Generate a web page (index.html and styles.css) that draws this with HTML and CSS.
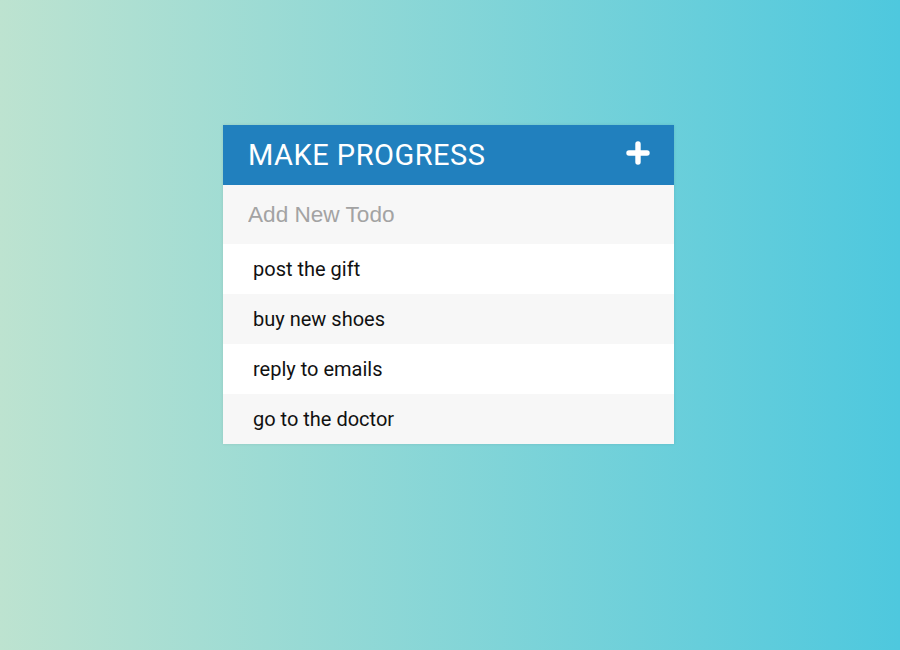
FILE: index.html
```html
<!DOCTYPE html>
<html lang="en">
<head>
<meta charset="utf-8">
<title>Make Progress</title>
<link rel="stylesheet" href="styles.css">
</head>
<body>
<div class="card">
  <header class="card-header">
    <h1 class="title">MAKE PROGRESS</h1>
    <button class="add-btn" aria-label="Add todo">
      <svg width="24" height="24" viewBox="0 0 24 24" aria-hidden="true">
        <path d="M12 3v18M3 12h18" stroke="#fff" stroke-width="5.4" stroke-linecap="round" fill="none"/>
      </svg>
    </button>
  </header>
  <input class="new-todo" type="text" placeholder="Add New Todo">
  <ul class="todos">
    <li class="todo">post the gift</li>
    <li class="todo">buy new shoes</li>
    <li class="todo">reply to emails</li>
    <li class="todo">go to the doctor</li>
  </ul>
</div>
</body>
</html>
```
FILE: styles.css
```css
html, body {
  height: 100%;
}
body {
  margin: 0;
  background: linear-gradient(to right, #bde3d0, #4ec8de);
  font-family: Roboto, "Liberation Sans", sans-serif;
  overflow: hidden;
}
.card {
  width: 451px;
  margin: 125px 0 0 223px;
  background: #fff;
  box-shadow: 0 0 3px rgba(0, 0, 0, 0.1);
}
.card-header {
  height: 60px;
  background: #2180be;
  display: flex;
  align-items: center;
  justify-content: space-between;
  padding: 0 24px 0 25px;
  box-sizing: border-box;
}
.title {
  margin: 0;
  color: #fff;
  font-size: 29px;
  letter-spacing: 0.5px;
  font-weight: 400;
  line-height: 1;
  padding-top: 1px;
}
.add-btn {
  background: none;
  border: 0;
  padding: 0;
  width: 24px;
  height: 24px;
  display: flex;
  margin-top: -5px;
}
.new-todo {
  display: block;
  width: 100%;
  box-sizing: border-box;
  height: 59px;
  border: 0;
  outline: none;
  background: #f7f7f7;
  padding: 0 0 0 25px;
  font-family: "Liberation Sans", Arial, sans-serif;
  font-size: 22.6px;
  color: #333;
}
.new-todo::placeholder {
  color: #a3a3a3;
}
.todos {
  list-style: none;
  margin: 0;
  padding: 0;
}
.todo {
  height: 50px;
  line-height: 50px;
  padding-left: 30px;
  font-size: 20px;
  color: #111;
  background: #fff;
}
.todo:nth-child(even) {
  background: #f7f7f7;
}
```
